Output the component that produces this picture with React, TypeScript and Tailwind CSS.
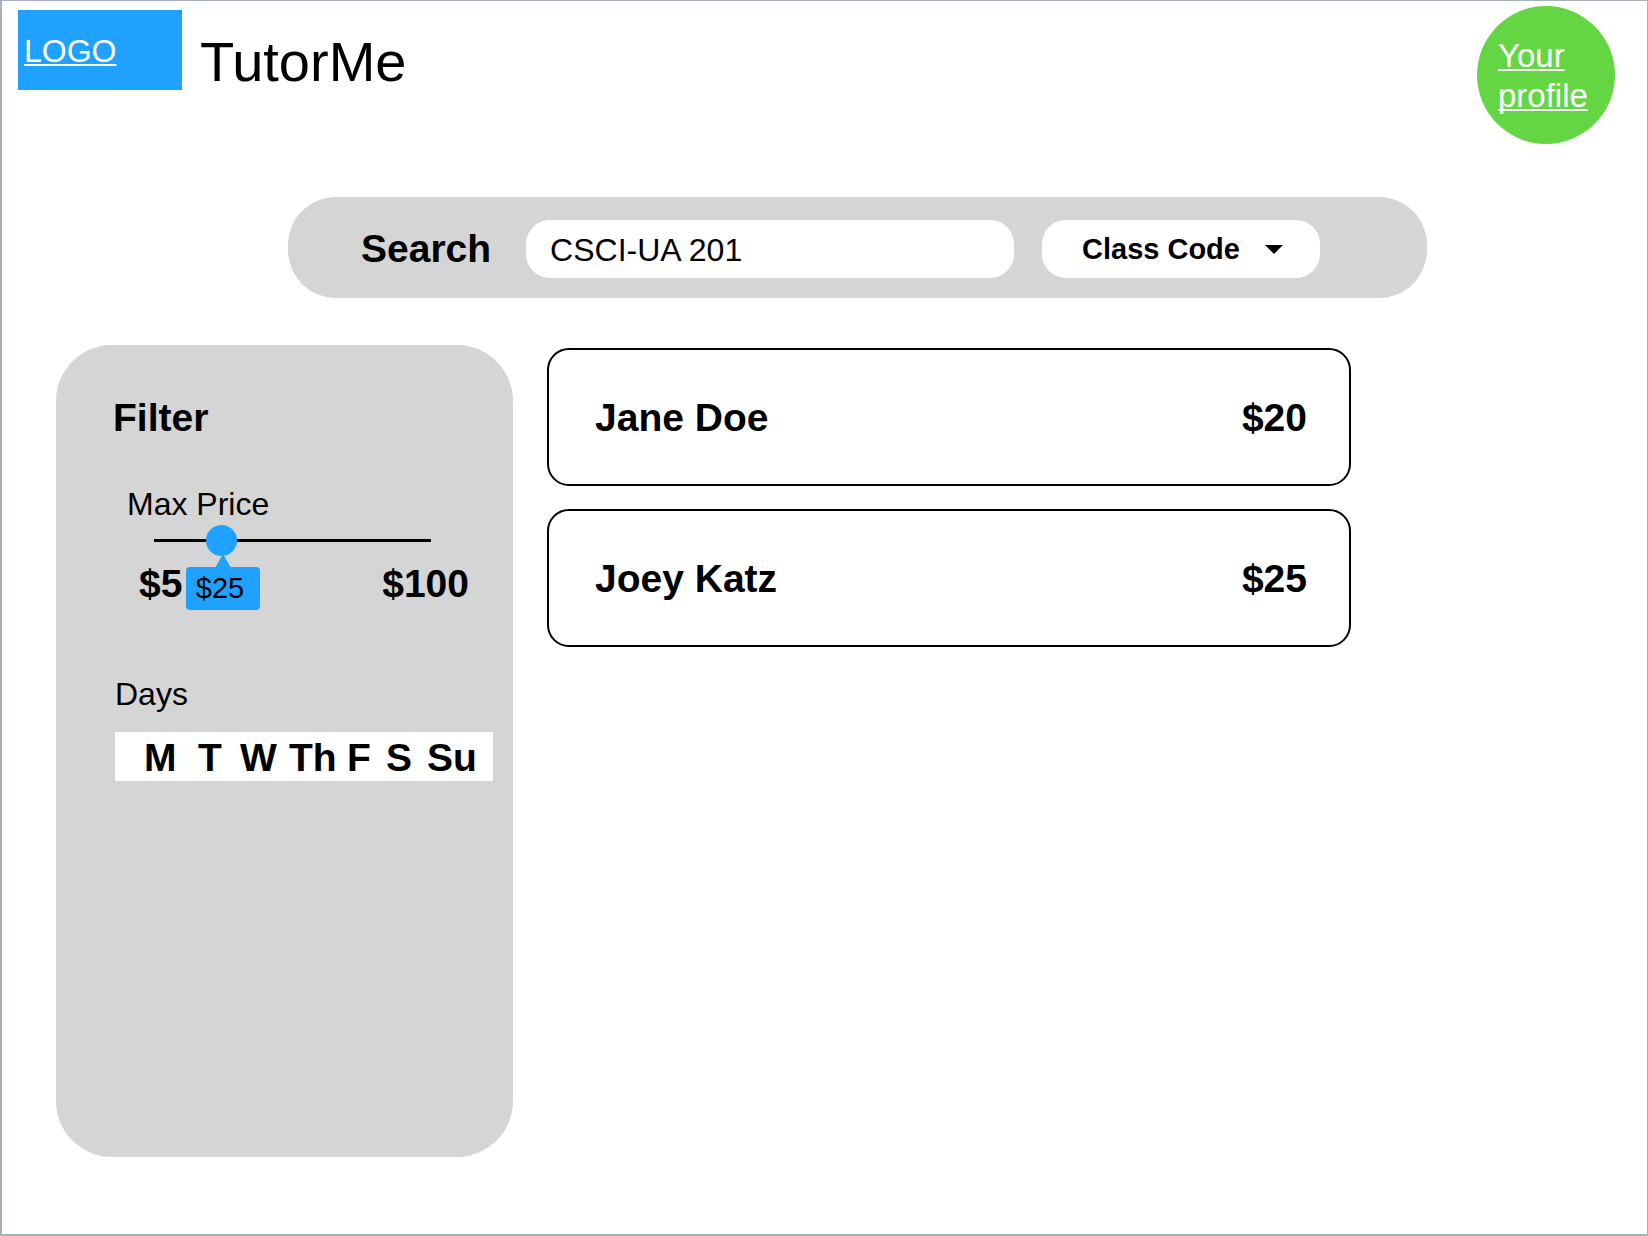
import { useState } from "react";

const tutors = [
  { name: "Jane Doe", price: 20 },
  { name: "Joey Katz", price: 25 },
];

const days = ["M", "T", "W", "Th", "F", "S", "Su"];

function Header() {
  return (
    <header className="flex items-start pl-4 pr-8">
      <a
        href="#home"
        className="mt-[9px] flex h-20 w-[164px] items-center bg-[#1fa2ff] pl-1.5 pt-0.5 text-[32px] text-white underline decoration-2 underline-offset-2 [text-decoration-skip-ink:none]"
      >
        LOGO
      </a>
      <h1 className="ml-[18px] mt-[29px] text-[56px] leading-[64px]">TutorMe</h1>
      <a
        href="#profile"
        className="ml-auto mt-[5px] h-[138px] w-[138px] rounded-full bg-[#65d643] pl-[21px] pr-4 pt-[30px] text-[33px] leading-10 text-white underline decoration-2 underline-offset-2 [text-decoration-skip-ink:none]"
      >
        Your profile
      </a>
    </header>
  );
}

function SearchBar() {
  const [query, setQuery] = useState("CSCI-UA 201");
  return (
    <form
      role="search"
      className="ml-[286px] mr-[220px] mt-[53px] flex items-center rounded-[48px] bg-[#d5d5d5] pb-5 pl-[73px] pr-[107px] pt-[23px]"
    >
      <label htmlFor="query" className="text-[39px] leading-[56px] font-bold">
        Search
      </label>
      <input
        id="query"
        type="text"
        value={query}
        onChange={(e) => setQuery(e.target.value)}
        className="ml-[35px] h-[58px] min-w-0 flex-1 rounded-[24px] bg-white px-6 pt-0.5 text-[32px] outline-none"
      />
      <div className="relative ml-7 w-[278px]">
        <select
          aria-label="Search by"
          className="h-[58px] w-full appearance-none rounded-[24px] bg-white pl-10 pt-0.5 text-[29px] font-bold outline-none"
        >
          <option>Class Code</option>
        </select>
        <svg
          viewBox="0 0 18 9"
          className="pointer-events-none absolute right-[37px] top-[25px] h-[9px] w-[18px]"
          aria-hidden="true"
        >
          <path d="M0 0H18L9 9Z" />
        </svg>
      </div>
    </form>
  );
}

function PriceSlider() {
  const [price, setPrice] = useState(25);
  const ratio = (price - 5) / 95;
  return (
    <div>
      <label htmlFor="max-price" className="mt-[42px] block pl-3 text-[32px] leading-10">
        Max Price
      </label>
      <div className="relative ml-[39px] w-[277px]">
        <input
          id="max-price"
          type="range"
          min={5}
          max={100}
          value={price}
          onChange={(e) => setPrice(Number(e.target.value))}
          className="block h-8 w-full appearance-none bg-transparent [&::-webkit-slider-runnable-track]:h-[3px] [&::-webkit-slider-runnable-track]:bg-black [&::-webkit-slider-thumb]:-mt-[14px] [&::-webkit-slider-thumb]:h-[31px] [&::-webkit-slider-thumb]:w-[31px] [&::-webkit-slider-thumb]:appearance-none [&::-webkit-slider-thumb]:rounded-full [&::-webkit-slider-thumb]:bg-[#1fa2ff]"
        />
        <output
          htmlFor="max-price"
          style={{ left: `calc(17px + ${ratio} * (100% - 31px))` }}
          className="absolute top-[43px] h-[43px] w-[74px] -translate-x-1/2 rounded-[4px] bg-[#1fa2ff] pl-2.5 text-[29px] leading-[43px]"
        >
          <svg
            viewBox="0 0 16 14"
            className="absolute -top-[13px] left-[29px] h-[14px] w-4 fill-[#1fa2ff]"
            aria-hidden="true"
          >
            <path d="M8 0L16 14H0Z" />
          </svg>
          ${price}
        </output>
      </div>
      <div className="mt-1 flex justify-between px-6 text-[39px] leading-12 font-bold">
        <span>$5</span>
        <span>$100</span>
      </div>
    </div>
  );
}

function DayPicker() {
  const [selected, setSelected] = useState<string[]>([]);
  const toggle = (day: string) =>
    setSelected((s) => (s.includes(day) ? s.filter((d) => d !== day) : [...s, day]));
  return (
    <section aria-labelledby="days">
      <h3 id="days" className="mt-[66px] text-[32px] leading-10">
        Days
      </h3>
      <div className="mt-[18px] grid grid-cols-[54px_42px_49px_58px_39px_41px_51px] bg-white pl-[29px] pt-0.5 text-[39px] leading-[47px] font-bold">
        {days.map((day) => (
          <button
            key={day}
            type="button"
            aria-pressed={selected.includes(day)}
            onClick={() => toggle(day)}
            className="text-left aria-pressed:text-[#1fa2ff]"
          >
            {day}
          </button>
        ))}
      </div>
    </section>
  );
}

export default function App() {
  return (
    <div className="flex min-h-screen flex-col border-t border-r border-b-2 border-l-2 border-[#a9b0bc] bg-white font-['Liberation_Sans',Arial,sans-serif] text-black">
      <Header />
      <SearchBar />
      <main className="mt-[47px] flex flex-1 items-stretch pb-[77px] pl-[54px] pr-[296px]">
        <aside className="w-[457px] shrink-0 rounded-[56px] bg-[#d5d5d5] pl-[59px] pr-5 pt-[49px]">
          <h2 className="-ml-0.5 text-[39px] leading-12 font-bold">Filter</h2>
          <PriceSlider />
          <DayPicker />
        </aside>
        <ul className="ml-[34px] mt-[3px] flex flex-1 flex-col gap-[23px]">
          {tutors.map((tutor) => (
            <li
              key={tutor.name}
              className="flex h-[138px] items-center justify-between rounded-[22px] border-2 border-black pl-[46px] pr-[42px] pt-0.5 text-[39px] leading-12 font-bold"
            >
              <span>{tutor.name}</span>
              <span>${tutor.price}</span>
            </li>
          ))}
        </ul>
      </main>
    </div>
  );
}
